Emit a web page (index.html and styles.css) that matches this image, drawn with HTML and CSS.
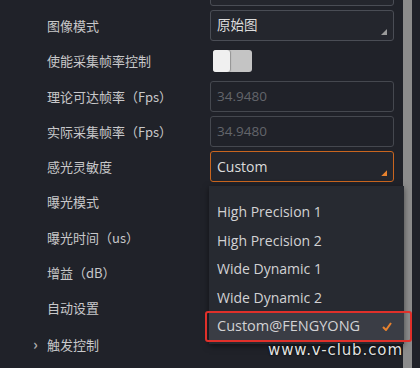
FILE: index.html
```html
<!DOCTYPE html>
<html lang="zh-CN">
<head>
    <meta charset="UTF-8">
    <meta name="viewport" content="width=device-width, initial-scale=1.0">
    <title>属性</title>
    <link rel="stylesheet" href="styles.css">
</head>
<body>
    <div class="panel">
        <div class="props">

            <div class="row">
                <span class="label"></span>
                <div class="select"></div>
            </div>

            <div class="row">
                <span class="label">图像模式</span>
                <div class="select">原始图</div>
            </div>

            <div class="row">
                <span class="label">使能采集帧率控制</span>
                <div class="toggle"><span class="knob"></span></div>
            </div>

            <div class="row">
                <span class="label">理论可达帧率（Fps）</span>
                <div class="input disabled">34.9480</div>
            </div>

            <div class="row">
                <span class="label">实际采集帧率（Fps）</span>
                <div class="input disabled">34.9480</div>
            </div>

            <div class="row">
                <span class="label">感光灵敏度</span>
                <div class="select active">
                    Custom
                    <ul class="menu">
                        <li>High Precision 1</li>
                        <li>High Precision 2</li>
                        <li>Wide Dynamic 1</li>
                        <li>Wide Dynamic 2</li>
                        <li class="selected">Custom@FENGYONG
                            <svg class="check" width="10" height="9" viewBox="0 0 10 9">
                                <polyline points="1,5 4,8 9,1" fill="none" stroke="#e8822e" stroke-width="2"/>
                            </svg>
                        </li>
                    </ul>
                </div>
            </div>

            <div class="row">
                <span class="label">曝光模式</span>
            </div>

            <div class="row">
                <span class="label">曝光时间（us）</span>
            </div>

            <div class="row">
                <span class="label">增益（dB）</span>
            </div>

            <div class="row">
                <span class="label">自动设置</span>
            </div>

            <div class="row">
                <span class="label"><span class="chevron">›</span>触发控制</span>
            </div>

        </div>
        <div class="scrollbar"></div>
        <div class="watermark">www.v-club.com</div>
    </div>
</body>
</html>
```

FILE: styles.css
```css
html, body{
    margin:0;
    padding:0;
    background-color:#202229;
}

.panel{
    position:relative;
    display:flex;
    width:420px;
    height:368px;
    overflow:hidden;
    font-family:"Noto Sans CJK SC", sans-serif;
}

.props{
    width:403px;
    margin-top:-27.5px;
}

.row{
    display:flex;
    align-items:center;
    height:35.3px;
}

.label{
    width:163px;
    padding-left:47px;
    font-size:13px;
    color:#c8c8ca;
    white-space:nowrap;
}

.chevron{
    display:inline-block;
    width:14px;
    margin-left:-14px;
    font-size:15px;
    font-weight:bold;
    color:#a8a8a8;
}

.select, .input{
    position:relative;
    box-sizing:border-box;
    width:184px;
    height:31px;
    line-height:29px;
    padding-left:6px;
    border:1px solid #4a4d55;
    border-radius:3px;
    background-color:#24262d;
    color:#dcdcdc;
    font-size:13.5px;
    font-family:"Open Sans", "Noto Sans CJK SC", sans-serif;
}

.select::after{
    content:'';
    position:absolute;
    right:6px;
    bottom:5px;
    width:6px;
    height:6px;
    background-color:#9a9a9a;
    clip-path:polygon(100% 0, 100% 100%, 0 100%);
}

.select.active{
    border-color:#c9651f;
    font-size:14px;
}

.select.active::after{
    background-color:#e8822e;
}

.input.disabled{
    background-color:#202229;
    border-color:#45484f;
    color:#63656b;
}

.toggle{
    display:flex;
    width:39px;
    height:22px;
    margin-left:3px;
    border-radius:3px;
    background-color:#c4c4c4;
}

.knob{
    width:17px;
    height:22px;
    border-radius:3px;
    background-color:#f0f0f0;
    box-shadow:1px 0 1px rgba(0,0,0,0.25);
}

.menu{
    position:absolute;
    top:34px;
    left:-2px;
    width:195px;
    margin:0;
    padding:12px 0 3px 0;
    list-style:none;
    background-color:#272a31;
    box-shadow:0 2px 6px rgba(0,0,0,0.5);
    z-index:2;
}

.menu li{
    position:relative;
    height:28.5px;
    line-height:28.5px;
    padding-left:8px;
    color:#d2d2d4;
    font-size:14px;
}

.menu li.selected{
    background-color:#3a3d45;
    font-size:14.5px;
}

.menu li.selected::after{
    content:'';
    position:absolute;
    top:-1px;
    bottom:-1px;
    left:-4px;
    right:-8px;
    border:2px solid #e0302a;
    border-radius:3px;
}

.check{
    position:absolute;
    right:12px;
    top:10px;
}

.scrollbar{
    width:9px;
    height:368px;
    background-color:#8c8c8c;
}

.watermark{
    position:absolute;
    left:268px;
    top:341px;
    font-family:"DejaVu Sans", sans-serif;
    font-size:15px;
    letter-spacing:0.9px;
    color:#e2e2e2;
    text-shadow:0 0 2px #000, 0 0 1px #000;
    z-index:3;
}
```
